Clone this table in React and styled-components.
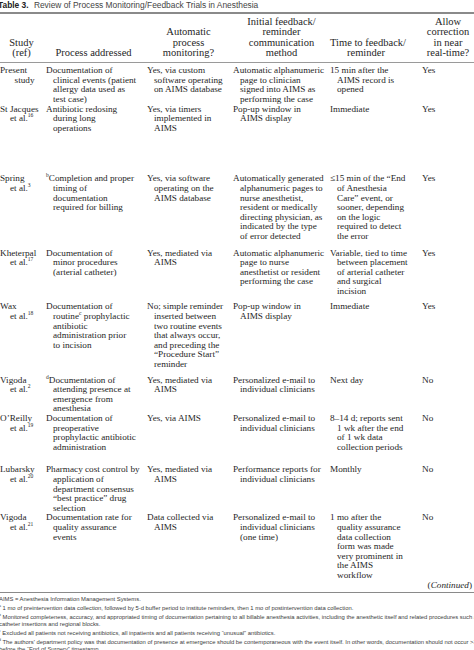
import React from "react";
import styled, { createGlobalStyle } from "styled-components";

const GlobalStyle = createGlobalStyle`
  html, body {
    margin: 0;
    padding: 0;
    background: #ffffff;
  }
  body {
    width: 474px;
    height: 650px;
    overflow: hidden;
  }
`;

const Page = styled.div`
  width: 474px;
  overflow: hidden;
  color: #262626;
`;

const Caption = styled.div`
  font-family: "Liberation Sans", Arial, sans-serif;
  font-size: 8.4px;
  line-height: 10px;
  color: #444;
  margin-left: -2px;
  padding-bottom: 2px;
  white-space: nowrap;
  b {
    color: #222;
    margin-right: 3px;
  }
`;

const Table = styled.table`
  width: 474px;
  table-layout: fixed;
  border-collapse: collapse;
  font-family: "Liberation Serif", "Times New Roman", serif;
  border-top: 2px solid #8a8a8a;
  border-bottom: 1.5px solid #8a8a8a;
`;

const Col = styled.col`
  width: ${(p) => p.$w}px;
`;

const HeadCell = styled.th`
  font-weight: normal;
  font-size: 10.5px;
  line-height: 10.3px;
  text-align: center;
  vertical-align: bottom;
  white-space: nowrap;
  padding: 3px ${(p) => p.$right || 0}px 4px 0;
  border-bottom: 1px solid #9a9a9a;
`;

const Row = styled.tr`
  & > td {
    padding-top: ${(p) => (p.$first ? 3 : 0)}px;
    padding-bottom: ${(p) => p.$gap || 0}px;
  }
`;

const Cell = styled.td`
  font-size: 9.2px;
  line-height: 9.6px;
  vertical-align: top;
  white-space: nowrap;
  padding-left: ${(p) => p.$indent}px;
  text-indent: -${(p) => p.$indent}px;
`;

const ContinuedCell = styled.td`
  font-size: 9.2px;
  line-height: 9.6px;
  text-align: right;
  padding: 0 2px 2px 0;
  i {
    font-style: italic;
  }
`;

const Sup = styled.sup`
  font-size: 0.6em;
  line-height: 0;
  vertical-align: super;
`;

const Notes = styled.div`
  font-family: "Liberation Sans", Arial, sans-serif;
  font-size: 5.85px;
  line-height: 6.9px;
  color: #3c3c3c;
  padding-top: 3px;
  margin-left: -1px;
`;

const Note = styled.p`
  margin: 0 0 2px 0;
  white-space: nowrap;
`;

const Lines = ({ lines }) =>
  lines.map((line, i) => (
    <React.Fragment key={i}>
      {i > 0 && <br />}
      {line}
    </React.Fragment>
  ));

const rows = [
  {
    gap: 0,
    study: ["Present", "\u2002study"],
    process: ["Documentation of", "clinical events (patient", "allergy data used as", "test case)"],
    auto: ["Yes, via custom", "software operating", "on AIMS database"],
    method: ["Automatic alphanumeric", "page to clinician", "signed into AIMS as", "performing the case"],
    time: ["15 min after the", "AIMS record is", "opened"],
    allow: "Yes",
  },
  {
    gap: 41,
    study: ["St Jacques", <>et al.<Sup>16</Sup></>],
    process: ["Antibiotic redosing", "during long", "operations"],
    auto: ["Yes, via timers", "implemented in", "AIMS"],
    method: ["Pop-up window in", "AIMS display"],
    time: ["Immediate"],
    allow: "Yes",
  },
  {
    gap: 7,
    study: ["Spring", <>et al.<Sup>3</Sup></>],
    process: [<><Sup>b</Sup>Completion and proper</>, "timing of", "documentation", "required for billing"],
    auto: ["Yes, via software", "operating on the", "AIMS database"],
    method: [
      "Automatically generated",
      "alphanumeric pages to",
      "nurse anesthetist,",
      "resident or medically",
      "directing physician, as",
      "indicated by the type",
      "of error detected",
    ],
    time: [
      "\u226415 min of the \u201cEnd",
      "of Anesthesia",
      "Care\u201d event, or",
      "sooner, depending",
      "on the logic",
      "required to detect",
      "the error",
    ],
    allow: "Yes",
  },
  {
    gap: 6,
    study: ["Kheterpal", <>et al.<Sup>17</Sup></>],
    process: ["Documentation of", "minor procedures", "(arterial catheter)"],
    auto: ["Yes, mediated via", "AIMS"],
    method: ["Automatic alphanumeric", "page to nurse", "anesthetist or resident", "performing the case"],
    time: ["Variable, tied to time", "between placement", "of arterial catheter", "and surgical", "incision"],
    allow: "Yes",
  },
  {
    gap: 6,
    study: ["Wax", <>et al.<Sup>18</Sup></>],
    process: [
      "Documentation of",
      <>routine<Sup>c</Sup> prophylactic</>,
      "antibiotic",
      "administration prior",
      "to incision",
    ],
    auto: [
      "No; simple reminder",
      "inserted between",
      "two routine events",
      "that always occur,",
      "and preceding the",
      "\u201cProcedure Start\u201d",
      "reminder",
    ],
    method: ["Pop-up window in", "AIMS display"],
    time: ["Immediate"],
    allow: "Yes",
  },
  {
    gap: 0,
    study: ["Vigoda", <>et al.<Sup>2</Sup></>],
    process: [<><Sup>d</Sup>Documentation of</>, "attending presence at", "emergence from", "anesthesia"],
    auto: ["Yes, mediated via", "AIMS"],
    method: ["Personalized e-mail to", "individual clinicians"],
    time: ["Next day"],
    allow: "No",
  },
  {
    gap: 13,
    study: ["O\u2019Reilly", <>et al.<Sup>19</Sup></>],
    process: ["Documentation of", "preoperative", "prophylactic antibiotic", "administration"],
    auto: ["Yes, via AIMS"],
    method: ["Personalized e-mail to", "individual clinicians"],
    time: ["8\u201314 d; reports sent", "1 wk after the end", "of 1 wk data", "collection periods"],
    allow: "No",
  },
  {
    gap: 0,
    study: ["Lubarsky", <>et al.<Sup>20</Sup></>],
    process: [
      "Pharmacy cost control by",
      "application of",
      "department consensus",
      "\u201cbest practice\u201d drug",
      "selection",
    ],
    auto: ["Yes, mediated via", "AIMS"],
    method: ["Performance reports for", "individual clinicians"],
    time: ["Monthly"],
    allow: "No",
  },
  {
    gap: 0,
    study: ["Vigoda", <>et al.<Sup>21</Sup></>],
    process: ["Documentation rate for", "quality assurance", "events"],
    auto: ["Data collected via", "AIMS"],
    method: ["Personalized e-mail to", "individual clinicians", "(one time)"],
    time: [
      "1 mo after the",
      "quality assurance",
      "data collection",
      "form was made",
      "very prominent in",
      "the AIMS",
      "workflow",
    ],
    allow: "No",
  },
];

const App = () => {
  return (
    <Page>
      <GlobalStyle />
      <Caption>
        <b>Table 3.</b> Review of Process Monitoring/Feedback Trials in Anesthesia
      </Caption>
      <Table>
        <colgroup>
          <Col $w={46} />
          <Col $w={101} />
          <Col $w={86} />
          <Col $w={97} />
          <Col $w={92} />
          <Col $w={52} />
        </colgroup>
        <thead>
          <tr>
            <HeadCell $right={3}>
              Study
              <br />
              (ref)
            </HeadCell>
            <HeadCell $right={6}>Process addressed</HeadCell>
            <HeadCell $right={3}>
              Automatic
              <br />
              process
              <br />
              monitoring?
            </HeadCell>
            <HeadCell>
              Initial feedback/
              <br />
              reminder
              <br />
              communication
              <br />
              method
            </HeadCell>
            <HeadCell $right={20}>
              Time to feedback/
              <br />
              reminder
            </HeadCell>
            <HeadCell>
              Allow
              <br />
              correction
              <br />
              in near
              <br />
              real-time?
            </HeadCell>
          </tr>
        </thead>
        <tbody>
          {rows.map((r, i) => (
            <Row key={i} $gap={r.gap} $first={i === 0}>
              <Cell $indent={10}>
                <Lines lines={r.study} />
              </Cell>
              <Cell $indent={7}>
                <Lines lines={r.process} />
              </Cell>
              <Cell $indent={7}>
                <Lines lines={r.auto} />
              </Cell>
              <Cell $indent={7}>
                <Lines lines={r.method} />
              </Cell>
              <Cell $indent={7}>
                <Lines lines={r.time} />
              </Cell>
              <Cell $indent={0}>{r.allow}</Cell>
            </Row>
          ))}
          <tr>
            <ContinuedCell colSpan={6}>
              (<i>Continued</i>)
            </ContinuedCell>
          </tr>
        </tbody>
      </Table>
      <Notes>
        <Note>AIMS = Anesthesia Information Management Systems.</Note>
        <Note>
          <Sup>a</Sup> 1 mo of preintervention data collection, followed by 5-d buffer period to institute
          reminders, then 1 mo of postintervention data collection.
        </Note>
        <Note>
          <Sup>b</Sup> Monitored completeness, accuracy, and appropriated timing of documentation pertaining to
          all billable anesthesia activities, including the anesthetic itself and related procedures such as
          <br />
          catheter insertions and regional blocks.
        </Note>
        <Note>
          <Sup>c</Sup> Excluded all patients not receiving antibiotics, all inpatients and all patients receiving
          {" \u201cunusual\u201d"} antibiotics.
        </Note>
        <Note>
          <Sup>d</Sup> The authors&apos; department policy was that documentation of presence at emergence should
          be contemporaneous with the event itself. In other words, documentation should not occur &gt;30 min
          <br />
          before the &ldquo;End of Surgery&rdquo; timestamp.
        </Note>
      </Notes>
    </Page>
  );
};

export default App;
